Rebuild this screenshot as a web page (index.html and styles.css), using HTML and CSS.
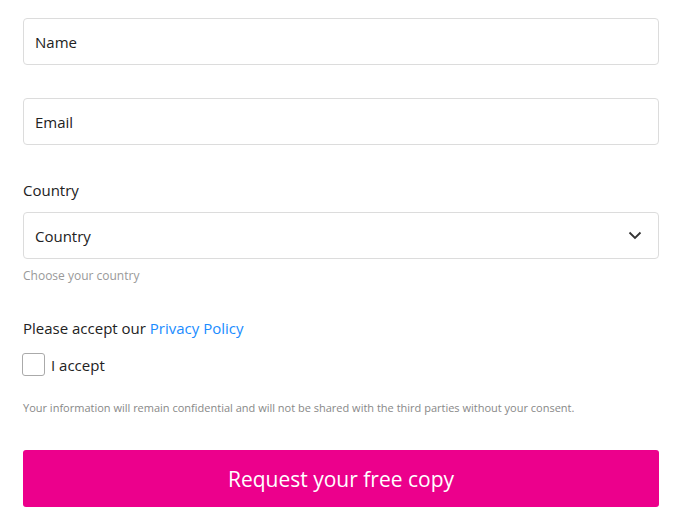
FILE: index.html
```html
<!DOCTYPE html>
<html lang="en">
<head>
  <meta charset="UTF-8" />
  <title>Request your free copy</title>
  <link rel="stylesheet" href="styles.css">
</head>
<body>
  <form class="request-form">
    <div class="field">
      <input type="text" placeholder="Name">
    </div>

    <div class="field">
      <input type="email" placeholder="Email">
    </div>

    <div class="field">
      <label class="field-label">Country</label>
      <div class="select-wrap">
        <select>
          <option>Country</option>
        </select>
        <svg class="chevron" width="14" height="9" viewBox="0 0 14 9"><path d="M1.5 1.5l5.5 5.5 5.5-5.5" fill="none" stroke="#333" stroke-width="1.8"/></svg>
      </div>
      <small class="help">Choose your country</small>
    </div>

    <div class="consent">
      <p class="consent-title">Please accept our <a href="#">Privacy Policy</a></p>
      <label class="check"><input type="checkbox"> I accept</label>
    </div>

    <p class="note">Your information will remain confidential and will not be shared with the third parties without your consent.</p>

    <button type="submit">Request your free copy</button>
  </form>
</body>
</html>
```

FILE: styles.css
```css
body {
  font-family: "Open Sans", "Noto Sans", sans-serif;
  background: #fff;
  color: #222;
  margin: 0;
  padding: 18px 21px 0 23px;
}

.request-form {
  display: flex;
  flex-direction: column;
}

.field {
  margin-bottom: 33px;
}

input[type="text"],
input[type="email"],
select {
  box-sizing: border-box;
  width: 100%;
  height: 47px;
  padding: 0 11px;
  border: 1px solid #dcdcdc;
  border-radius: 4px;
  font-family: inherit;
  font-size: 15px;
  color: #222;
  background: #fff;
}

input::placeholder {
  color: #222;
}

.field-label {
  display: block;
  font-size: 15px;
  margin: 2px 0 12px;
}

.select-wrap {
  position: relative;
}

select {
  appearance: none;
}

.chevron {
  position: absolute;
  right: 17px;
  top: 19px;
}

.help {
  display: block;
  font-size: 12px;
  color: #999;
  margin-top: 8px;
}

.consent {
  margin-top: 1px;
}

.consent-title {
  font-size: 15px;
  margin: 0 0 15px;
}

.consent-title a {
  color: #1a8cff;
  text-decoration: none;
}

.check {
  display: flex;
  align-items: center;
  gap: 6px;
  font-size: 15px;
  margin-left: -1px;
}

input[type="checkbox"] {
  appearance: none;
  width: 23px;
  height: 23px;
  margin: 0;
  border: 1px solid #aaa;
  border-radius: 3px;
  background: #fff;
}

.note {
  font-size: 11px;
  color: #888;
  margin: 24px 0 35px;
}

button {
  height: 57px;
  border: none;
  border-radius: 3px;
  background: #ec008c;
  color: #fff;
  font-family: inherit;
  font-size: 21px;
  cursor: pointer;
}
```
